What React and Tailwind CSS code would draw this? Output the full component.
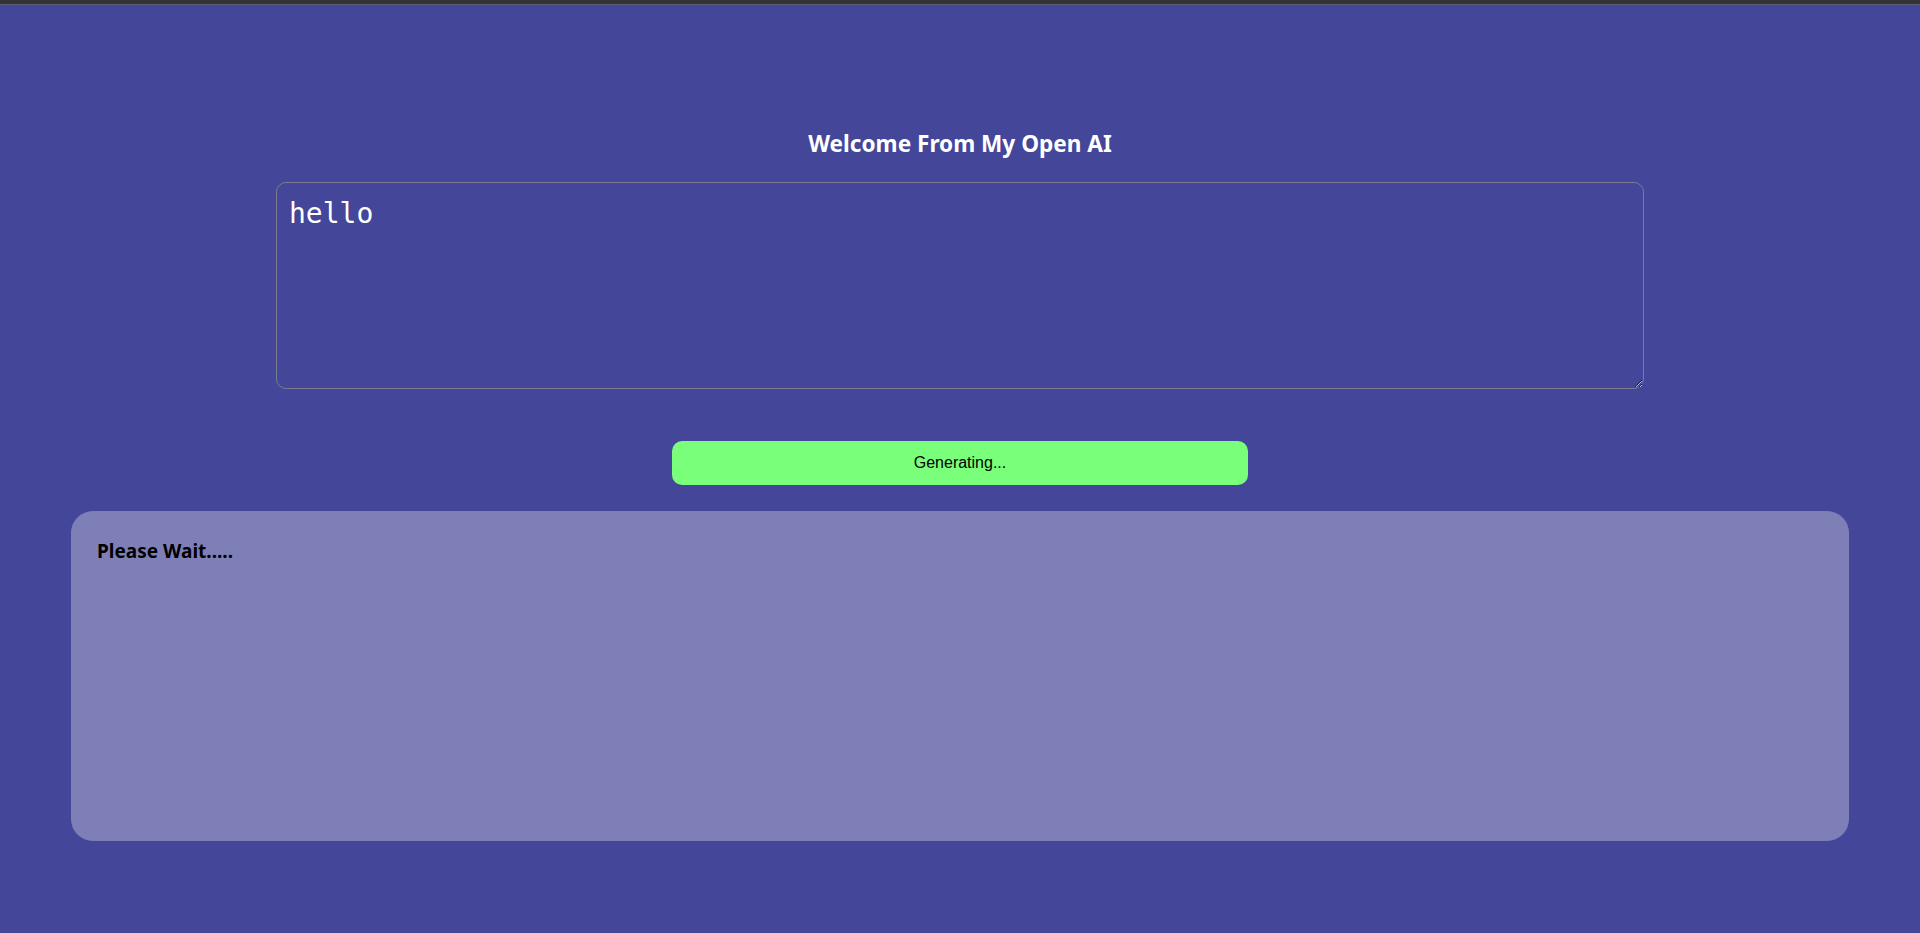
import { useState } from 'react';

export default function App() {
  const [prompt, setPrompt] = useState('hello');

  return (
    <div className="min-h-[933px] bg-[#434699] font-['Noto_Sans',sans-serif]">
      <div className="h-[5px] bg-[#333438] border-b border-[#5b5c70]" />
      <div className="flex flex-col items-center">
        <h1 className="mt-[124px] text-[22.6px] leading-[30px] font-bold text-white">Welcome From My Open AI</h1>
        <textarea
          value={prompt}
          onChange={(e) => setPrompt(e.target.value)}
          className="mt-[23px] w-[1368px] h-[207px] rounded-[10px] border border-[#7a7b90] bg-transparent px-[12px] pt-[13px] pb-[10px] text-[28px] leading-[36px] text-white font-['DejaVu_Sans_Mono',monospace] outline-none resize"
        />
        <button className="mt-[52px] w-[576px] h-[44px] rounded-[10px] bg-[#79ff79] text-[16px] text-black font-['Liberation_Sans',sans-serif]">
          Generating...
        </button>
        <div className="mt-[26px] w-[1778px] h-[330px] rounded-[22px] bg-[#7f7fb8] px-[26px] py-[28px]">
          <p className="text-[19px] font-bold text-black leading-[24px]">Please Wait.....</p>
        </div>
      </div>
    </div>
  );
}
